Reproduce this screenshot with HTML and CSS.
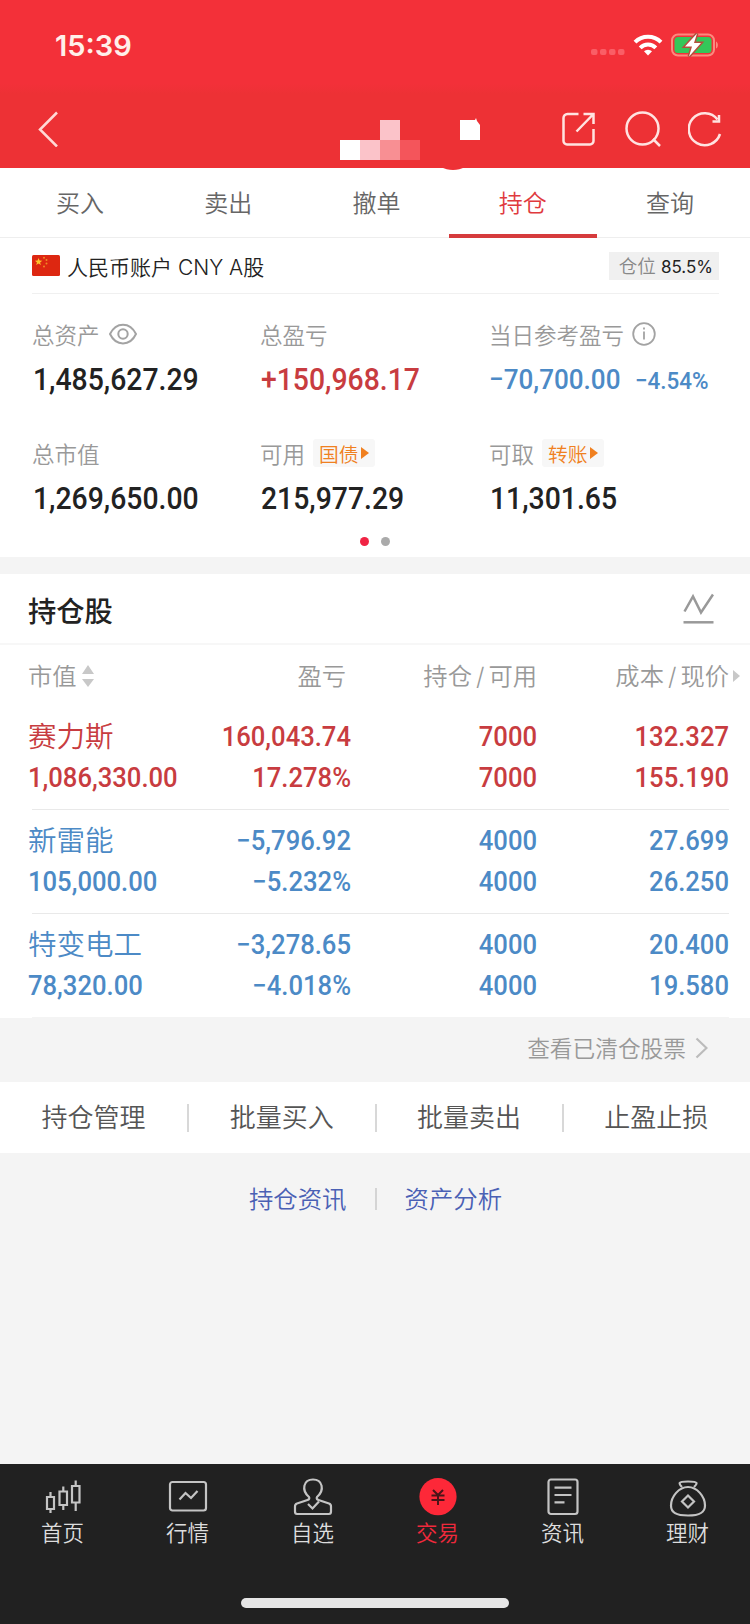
FILE: index.html
```
<!DOCTYPE html>
<html lang="zh-CN">
<head>
    <meta charset="UTF-8">
    <meta name="viewport" content="width=device-width, initial-scale=1.0">
    <title>持仓</title>
    <link rel="stylesheet" href="styles.css">
</head>
<body>

    <header class="header">
        <div class="status-bar">
            <span class="time">15:39</span>
            <div class="status-icons">
                <svg class="signal" width="34" height="7" viewBox="0 0 34 7"><g fill="#fa5e66"><rect width="6.500" height="6" rx="2"/><rect x="9" width="6.500" height="6" rx="2"/><rect x="18" width="6.500" height="6" rx="2"/><rect x="27" width="6.500" height="6" rx="2"/></g></svg>
                <svg class="wifi" width="30" height="22" viewBox="0 0 30 22" fill="none" stroke="#fff" stroke-width="4"><path d="M2 8.200a18.500 18.500 0 0 1 26 0"/><path d="M7.200 13.800a11 11 0 0 1 15.600 0"/><path d="M15 21.500l-4-4.200a5.700 5.700 0 0 1 8 0z" fill="#fff" stroke="none"/></svg>
                <svg class="battery" width="49" height="24" viewBox="0 0 49 24"><rect x="1" y="1.500" width="42" height="21" rx="6" fill="none" stroke="#fb8a7e" stroke-width="2"/><rect x="3.500" y="4" width="37" height="16" rx="3.500" fill="#34c759"/><path d="M45 8.500c2.500 1 2.500 6 0 7z" fill="#fb8a7e"/><path d="M26 .5L14 13.500h7L18 23.500l12-13.500h-7z" fill="#fff" stroke="#b4503c" stroke-width="3" paint-order="stroke"/></svg>
            </div>
        </div>
        <div class="nav-bar">
            <svg class="back" width="22" height="36" viewBox="0 0 22 36"><path d="M20 1.500L3 18.500l17 17" fill="none" stroke="#ffd9d6" stroke-width="2.500"/></svg>
            <svg class="account-name" width="145" height="56" viewBox="0 0 145 56">
                <rect x="0" y="26" width="20" height="20" fill="#fff"/>
                <rect x="20" y="26" width="20" height="20" fill="#fbc3c9"/>
                <rect x="40" y="6" width="20" height="20" fill="#fbc3c9"/>
                <rect x="40" y="26" width="20" height="20" fill="#f88f93"/>
                <rect x="60" y="26" width="20" height="20" fill="#f4555b"/>
                <path d="M120 6h15l1-2 1 3 3 4v15h-20z" fill="#fff"/>
                <path d="M101 53c7 4 17 4 24 0z" fill="#ee3036"/>
            </svg>
            <div class="nav-icons">
                <svg width="34" height="34" viewBox="0 0 34 34" fill="none" stroke="#ffe3e1" stroke-width="2.500"><path d="M16.500 2H5.500A4 4 0 0 0 1.500 6v23a3.500 3.500 0 0 0 3.500 3.500h23a3.500 3.500 0 0 0 3.500-3.500V17"/><path d="M21.500 2h10v10M31 2.500L14.500 19.500"/></svg>
                <svg width="36" height="36" viewBox="0 0 36 36" fill="none" stroke="#ffe3e1" stroke-width="2.500"><circle cx="17.500" cy="17.500" r="16"/><path d="M28 28l7 7"/></svg>
                <svg width="34" height="36" viewBox="0 0 34 36" fill="none" stroke="#ffe3e1" stroke-width="2.500"><path d="M29.500 8.500A16 16 0 1 0 32 23"/><path d="M31 4v6.500h-6.500"/></svg>
            </div>
        </div>
    </header>

    <nav class="tabs">
        <a class="tab">买入</a>
        <a class="tab">卖出</a>
        <a class="tab">撤单</a>
        <a class="tab active">持仓</a>
        <a class="tab">查询</a>
    </nav>

    <section class="summary">
        <div class="account">
            <svg class="flag" width="28" height="21" viewBox="0 0 28 21"><rect width="28" height="21" rx="1.500" fill="#dd2711"/><path d="M6.500 3l1.100 2.600 2.700.1-2.200 1.700.8 2.700-2.400-1.500L4.200 10l.8-2.600L2.900 5.700l2.700-.1z" fill="#fdc52c"/><g fill="#f08a26"><circle cx="12" cy="2.700" r="1"/><circle cx="14.500" cy="5" r="1"/><circle cx="14.500" cy="8.500" r="1"/><circle cx="12" cy="11.500" r="1"/></g></svg>
            <span class="account-title">人民币账户 CNY A股</span>
            <span class="position">仓位 <b>85.5%</b></span>
        </div>
        <div class="metrics">
            <div class="metric">
                <div class="label">总资产
                    <svg class="eye" width="28" height="22" viewBox="0 0 28 22" fill="none" stroke="#a3a3a3" stroke-width="2"><path d="M1 11C7-1.500 21-1.500 27 11 21 23.500 7 23.500 1 11z"/><circle cx="14" cy="11" r="4.700"/></svg>
                </div>
                <div class="value"><span class="num">1,485,627.29</span></div>
            </div>
            <div class="metric">
                <div class="label">总盈亏</div>
                <div class="value red"><span class="num">+150,968.17</span></div>
            </div>
            <div class="metric">
                <div class="label">当日参考盈亏
                    <svg class="info" width="24" height="24" viewBox="0 0 24 24" fill="none" stroke="#a3a3a3" stroke-width="1.800"><circle cx="12" cy="12" r="10.800"/><path d="M12 9.500v8M12 5.500v2"/></svg>
                </div>
                <div class="value blue"><span class="num">−70,700.00</span><span class="num rate">−4.54%</span></div>
            </div>
            <div class="metric">
                <div class="label">总市值</div>
                <div class="value"><span class="num">1,269,650.00</span></div>
            </div>
            <div class="metric">
                <div class="label">可用 <span class="tag">国债<i></i></span></div>
                <div class="value"><span class="num">215,977.29</span></div>
            </div>
            <div class="metric">
                <div class="label">可取 <span class="tag">转账<i></i></span></div>
                <div class="value"><span class="num">11,301.65</span></div>
            </div>
        </div>
        <div class="dots"><i class="on"></i><i></i></div>
    </section>

    <section class="holdings">
        <div class="holdings-title">
            <h2>持仓股</h2>
            <svg width="31" height="31" viewBox="0 0 31 31" fill="none" stroke="#999" stroke-width="2.500"><path d="M1.500 18.500L10 3.500l8 16L30 1.500"/><path d="M.5 29.300h30"/></svg>
        </div>
        <div class="row head">
            <span>市值<svg class="sort" width="12" height="22" viewBox="0 0 12 22" fill="#c8c8c8"><path d="M6 0l6 9H0zM6 22l6-8H0z"/></svg></span>
            <span class="profit">盈亏</span>
            <span>持仓<em>/</em>可用</span>
            <span>成本<em>/</em>现价<i class="more"></i></span>
        </div>
        <div class="row red">
            <div><p class="name">赛力斯</p><p class="num">1,086,330.00</p></div>
            <div><p class="num">160,043.74</p><p class="num">17.278%</p></div>
            <div><p class="num">7000</p><p class="num">7000</p></div>
            <div><p class="num">132.327</p><p class="num">155.190</p></div>
        </div>
        <div class="row blue">
            <div><p class="name">新雷能</p><p class="num">105,000.00</p></div>
            <div><p class="num">−5,796.92</p><p class="num">−5.232%</p></div>
            <div><p class="num">4000</p><p class="num">4000</p></div>
            <div><p class="num">27.699</p><p class="num">26.250</p></div>
        </div>
        <div class="row blue">
            <div><p class="name">特变电工</p><p class="num">78,320.00</p></div>
            <div><p class="num">−3,278.65</p><p class="num">−4.018%</p></div>
            <div><p class="num">4000</p><p class="num">4000</p></div>
            <div><p class="num">20.400</p><p class="num">19.580</p></div>
        </div>
    </section>

    <a class="cleared">查看已清仓股票
        <svg width="13" height="22" viewBox="0 0 13 22"><path d="M1.500 1.500l10 9.500-10 9.500" fill="none" stroke="#bbb" stroke-width="2.200"/></svg>
    </a>

    <div class="actions">
        <a>持仓管理</a>
        <a>批量买入</a>
        <a>批量卖出</a>
        <a>止盈止损</a>
    </div>

    <div class="links">
        <a>持仓资讯</a>
        <a>资产分析</a>
    </div>

    <footer class="tab-bar">
        <div class="tab-items">
            <a><svg width="40" height="40" viewBox="0 0 40 40" fill="none" stroke="#c4c4c4" stroke-width="2.200"><path d="M4 19h7v12H4zM7.500 14v5M7.500 31v4M16.500 13.500h7.500V27h-7.500zM20.300 8.500v5M20.300 27v5M29 8h7.500v16.500H29zM32.700 2.500V8M32.700 24.500V33"/></svg>首页</a>
            <a><svg width="40" height="40" viewBox="0 0 40 40" fill="none" stroke="#c4c4c4" stroke-width="2.200"><rect x="2" y="4" width="36" height="28.500" rx="2.500"/><path d="M11.500 21.500l6-6.500 5.500 5 6.500-7"/></svg>行情</a>
            <a><svg width="40" height="40" viewBox="0 0 40 40" fill="none" stroke="#c4c4c4" stroke-width="2.200"><path d="M16 19c-8-7-5.500-17.500 4-17.500S32 12 24 19c-.8 1.500 0 2.500 1.500 3L36 25.500c1.500.5 2 1.500 2 3v5c0 1.500-.8 2.500-2 2.500H4c-1.200 0-2-1-2-2.500v-5c0-1.500.5-2.500 2-3L14.500 22c1.500-.5 2.300-1.500 1.500-3z"/><path d="M15 26l4.500 4.500 6.500-7"/></svg>自选</a>
            <a class="active"><svg width="40" height="40" viewBox="0 0 40 40"><circle cx="20" cy="18.700" r="18.600" fill="#fd2838"/><path d="M15 12l5 5 5-5M20 17v10M13.500 17.500h13M13.500 22h13" fill="none" stroke="#4a1418" stroke-width="2"/></svg>交易</a>
            <a><svg width="40" height="40" viewBox="0 0 40 40" fill="none" stroke="#c4c4c4" stroke-width="2.200"><rect x="5.500" y="1.500" width="29" height="34.500" rx="2.500"/><path d="M11.500 9.700h17M11.500 17h17M11.500 24.300h10"/></svg>资讯</a>
            <a><svg width="40" height="40" viewBox="0 0 40 40" fill="none" stroke="#c4c4c4" stroke-width="2.200"><path d="M14 9c-1.500-1.500-2.500-3.500-2.300-4C12.500 3 27.500 3 28.500 5c.2.500-1 2.500-2.500 4"/><path d="M20 9c9 0 17 9.500 17 18.500 0 7-5 10-17 10s-17-3-17-10C3 18.500 11 9 20 9z"/><path d="M20 17.500l6 6-6 6-6-6z"/></svg>理财</a>
        </div>
        <div class="home-bar"></div>
    </footer>

</body>
</html>
```
FILE: styles.css
```
* {
    box-sizing: border-box;
}

body {
    margin: 0;
    width: 750px;
    height: 1624px;
    display: flex;
    flex-direction: column;
    font-family: Inter, "Noto Sans CJK SC", sans-serif;
    font-weight: 350;
    background-color: #f4f4f4;
    overflow: hidden;
}

svg {
    display: block;
    flex: none;
}

p, h2 {
    margin: 0;
}

.red {
    color: #c83c40;
}

.blue {
    color: #4c8ac6;
}

.num {
    font-family: Roboto, sans-serif;
    font-weight: 500;
    white-space: nowrap;
    display: inline-block;
    transform: scaleX(0.915);
    transform-origin: left;
}

/* header */
.header {
    position: relative;
    z-index: 1;
    height: 168px;
    background: linear-gradient(#f33039 50%, #ed3135 56%);
}

.status-bar {
    height: 90px;
    padding: 0 30px 0 55px;
    display: flex;
    justify-content: space-between;
    align-items: center;
}

.time {
    font-size: 29px;
    font-weight: 600;
    color: #fff0ea;
}

.status-icons {
    display: flex;
    align-items: center;
}

.signal {
    margin: 14px 8px 0 0;
}

.wifi {
    margin-right: 8px;
}

.nav-bar {
    height: 78px;
    padding: 0 28px 0 37px;
    display: flex;
    align-items: center;
}

.back {
    margin-top: -1px;
}

.account-name {
    margin: 26px auto 0 281px;
    overflow: visible;
}

.nav-icons {
    display: flex;
    align-items: center;
    gap: 28px;
}

.nav-icons svg:nth-child(2) {
    margin-left: 1px;
    margin-right: -1px;
}

/* top tabs */
.tabs {
    height: 70px;
    padding: 0 6px;
    display: flex;
    background-color: #fff;
    border-bottom: 1px solid #eee;
}

.tab {
    flex: 1;
    font-size: 24px;
    line-height: 72px;
    text-align: center;
    color: #666;
}

.tab.active {
    height: 70px;
    margin: 0 -1px 0 -2px;
    color: #e03a3e;
    border-bottom: 4px solid #d63b3d;
}

/* account summary */
.summary {
    height: 319px;
    padding: 0 31px 0 32px;
    background-color: #fff;
}

.account {
    height: 56px;
    display: flex;
    align-items: center;
    border-bottom: 1px solid #f0f0f0;
}

.account-title {
    margin-left: 7px;
    font-size: 21px;
    color: #222;
}

.position {
    margin-left: auto;
    height: 28px;
    padding: 0 6px 0 10px;
    font-size: 18.500px;
    line-height: 28px;
    color: #888;
    background-color: #f0f0f0;
}

.position b {
    font-weight: 400;
    font-size: 17px;
    color: #222;
}

.metrics {
    display: grid;
    grid-template-columns: 228px 229px 1fr;
    grid-template-rows: 119px 105px;
    padding-top: 23px;
}

.label {
    height: 34px;
    display: flex;
    align-items: center;
    font-size: 22.500px;
    color: #999;
}

.eye {
    margin-left: 9px;
}

.info {
    margin-left: 8px;
}

.value {
    height: 56px;
    padding-left: 1px;
    line-height: 56px;
    font-size: 31px;
    color: #222;
}

.value.red {
    color: #c83c40;
}

.value.blue {
    padding-left: 0;
    font-size: 28.500px;
    color: #4c8ac6;
}

.rate {
    margin-left: 2px;
    font-size: 24.500px;
}

.tag {
    height: 28px;
    margin-left: 8px;
    padding: 0 6px;
    display: flex;
    align-items: center;
    font-size: 19.800px;
    color: #f08020;
    background-color: #f7f7f7;
    border-radius: 3px;
}

.tag i {
    margin-left: 2px;
    border: 6px solid transparent;
    border-left: 8px solid #f08020;
    border-right: 0;
}

.dots {
    display: flex;
    justify-content: center;
    gap: 12px;
    margin: -4px 1px 0 0;
}

.dots i {
    width: 9px;
    height: 9px;
    border-radius: 50%;
    background-color: #aaa;
}

.dots .on {
    background-color: #f02444;
}

/* holdings */
.holdings {
    margin-top: 17px;
    height: 444px;
    background-color: #fff;
}

.holdings-title {
    height: 71px;
    padding: 2px 36px 0 28px;
    display: flex;
    justify-content: space-between;
    align-items: center;
    border-bottom: 2px solid #f7f7f7;
}

.holdings-title svg {
    margin-top: -3px;
}

.holdings-title h2 {
    font-size: 28.300px;
    font-weight: 500;
    color: #222;
}

.row {
    height: 104px;
    margin: 0 21px 0 32px;
    display: grid;
    grid-template-columns: 160px 159px 186px 192px;
    border-bottom: 1px solid #e9e9e9;
    font-size: 28px;
}

.row:last-child {
    border-bottom-color: #f4f4f4;
}

.row > * {
    text-align: right;
}

.row > :first-child {
    margin-left: -4px;
    text-align: left;
    white-space: nowrap;
}

.row p {
    display: block;
    height: 41px;
    line-height: 41px;
    transform-origin: right;
}

.row > :first-child p {
    transform-origin: left;
}

.row > div {
    padding-top: 10px;
}

.row .name {
    font-size: 28.500px;
    line-height: 41px;
}

.row.head {
    height: 61px;
    border: 0;
    align-items: center;
    line-height: 63px;
    font-size: 24.300px;
    color: #999;
}

.head .profit {
    padding-right: 5px;
}

.head em {
    margin: 0 4px;
    font-style: normal;
}

.sort {
    display: inline-block;
    margin-left: 5px;
    vertical-align: -2px;
}

.more {
    display: inline-block;
    margin: 0 -11px 0 4px;
    border: 6px solid transparent;
    border-left: 7px solid #c8c8c8;
    border-right: 0;
    vertical-align: 3px;
}

.cleared {
    height: 64px;
    padding: 0 42px 5px 0;
    display: flex;
    justify-content: flex-end;
    align-items: center;
    gap: 9px;
    font-size: 22.700px;
    color: #999;
}

/* actions */
.actions {
    height: 71px;
    padding: 1px 1px 0 0;
    display: grid;
    grid-template-columns: repeat(4, 1fr);
    align-items: center;
    background-color: #fff;
}

.actions a {
    line-height: 28px;
    font-size: 26px;
    text-align: center;
    color: #555;
}

.actions a + a {
    border-left: 2px solid #d8d8d8;
}

.links {
    height: 92px;
    padding-left: 1px;
    display: flex;
    justify-content: center;
    align-items: center;
}

.links a {
    padding: 0 28px;
    line-height: 22px;
    font-size: 24.400px;
    color: #4a60b4;
}

.links a + a {
    border-left: 2px solid #d4d4d4;
}

/* bottom bar */
.tab-bar {
    margin-top: auto;
    height: 160px;
    padding-top: 14px;
    background-color: #212121;
}

.tab-items {
    height: 120px;
    display: grid;
    grid-template-columns: repeat(6, 1fr);
}

.tab-items a {
    display: flex;
    flex-direction: column;
    align-items: center;
    font-size: 21.500px;
    line-height: 30px;
    color: #ddd;
}

.tab-items .active {
    color: #f0293c;
}

.home-bar {
    width: 268px;
    height: 10px;
    margin: 0 auto;
    border-radius: 5px;
    background-color: #e6e6e6;
}
```
